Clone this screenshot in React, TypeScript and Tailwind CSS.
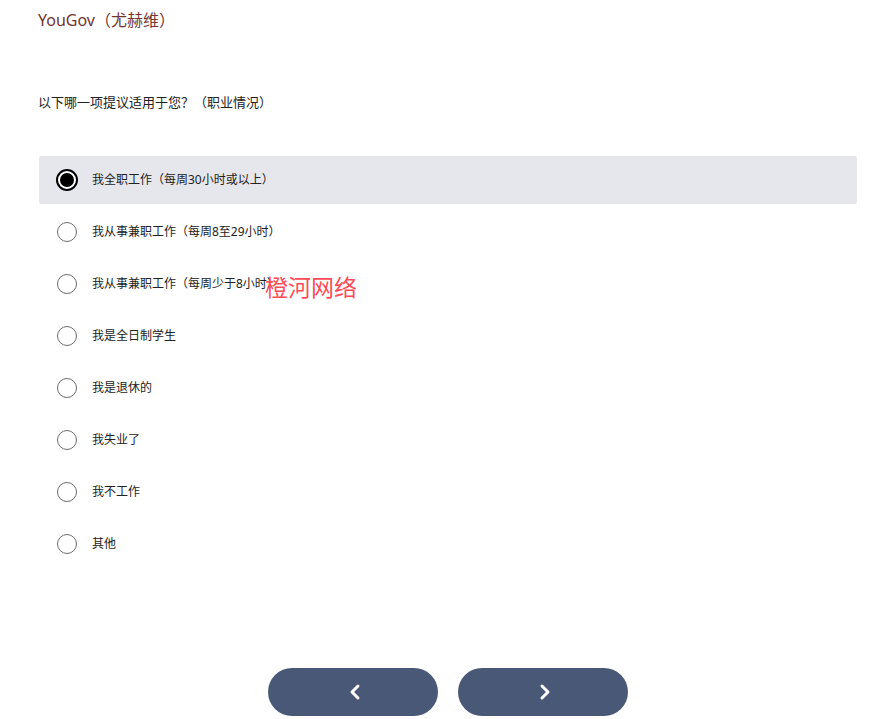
const options = [
  "我全职工作（每周30小时或以上）",
  "我从事兼职工作（每周8至29小时）",
  "我从事兼职工作（每周少于8小时）",
  "我是全日制学生",
  "我是退休的",
  "我失业了",
  "我不工作",
  "其他",
];

function Radio({ checked }: { checked: boolean }) {
  if (checked) {
    return (
      <span className="flex h-[22px] w-[22px] shrink-0 items-center justify-center rounded-full border-[2px] border-black bg-white">
        <span className="h-[14px] w-[14px] rounded-full bg-black" />
      </span>
    );
  }
  return <span className="h-[20px] w-[20px] shrink-0 rounded-full border border-[#6b6b6b] bg-white" />;
}

export default function App() {
  const selected = 0;
  return (
    <div
      className="relative h-[719px] w-[896px] bg-white text-[#222]"
      style={{ fontFamily: '"Noto Sans", "Noto Sans CJK SC", sans-serif' }}
    >
      <div className="px-[38px] pt-[8px]">
        <div className="text-[16px] leading-[24px] text-[#73352f]">YouGov（尤赫维）</div>
        <div className="mt-[58px] text-[13px] leading-[24px] text-[#222]">
          以下哪一项提议适用于您？（职业情况）
        </div>
      </div>

      <div className="mt-[42px] flex flex-col gap-[4px] px-[39px]">
        {options.map((o, i) => (
          <div
            key={o}
            className={`flex h-[48px] items-center rounded-[2px] pl-[18px] ${i === selected ? "bg-[#e6e7ec]" : ""}`}
          >
            <div className="flex w-[20px] items-center justify-center">
              <Radio checked={i === selected} />
            </div>
            <span className="ml-[15px] text-[12px] text-[#222]">{o}</span>
          </div>
        ))}
      </div>

      <div className="absolute left-[265px] top-[271px] text-[23px] leading-[32px] text-[#ff4b57]">
        橙河网络
      </div>

      <div className="absolute bottom-[3px] left-0 right-0 flex justify-center gap-[20px]">
        <button className="flex h-[48px] w-[170px] items-center justify-center rounded-full bg-[#4a5877] text-white">
          <svg width="16" height="18" viewBox="0 0 16 18" fill="none" className="ml-[4px]">
            <path d="M11 3 L5 9 L11 15" stroke="white" strokeWidth="3" strokeLinecap="round" strokeLinejoin="round" />
          </svg>
        </button>
        <button className="flex h-[48px] w-[170px] items-center justify-center rounded-full bg-[#4a5877] text-white">
          <svg width="16" height="18" viewBox="0 0 16 18" fill="none" className="ml-[4px]">
            <path d="M5 3 L11 9 L5 15" stroke="white" strokeWidth="3" strokeLinecap="round" strokeLinejoin="round" />
          </svg>
        </button>
      </div>
    </div>
  );
}
